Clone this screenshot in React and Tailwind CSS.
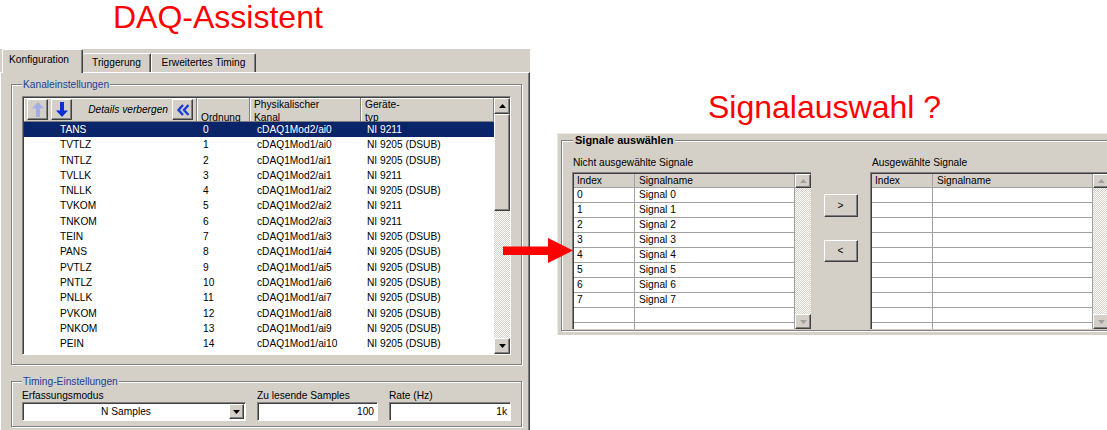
const raised = 'bg-[#d4d0c8] border border-t-white border-l-white border-r-[#404040] border-b-[#404040] shadow-[inset_-1px_-1px_0_#808080]';
const sunken = 'border border-t-[#808080] border-l-[#808080] border-r-white border-b-white shadow-[inset_1px_1px_0_#404040]';
const headCell = 'border-r border-b border-r-[#808080] border-b-[#808080] shadow-[inset_1px_1px_0_white]';
const dither = 'bg-[image:repeating-conic-gradient(#ffffff_0_25%,#d4d0c8_0_50%)] bg-[length:2px_2px]';

const Tri = ({ down, color = '#000' }) => (
  <svg width="7" height="4" viewBox="0 0 7 4">
    <polygon points={down ? '0,0 7,0 3.5,4' : '3.5,0 7,4 0,4'} fill={color} />
  </svg>
);

const UpArrow = () => (
  <svg width="12" height="15" viewBox="0 0 12 15">
    <polygon points="6,0 12,6.5 8,6.5 8,15 4,15 4,6.5 0,6.5" fill="#a4aee6" />
  </svg>
);

const DownArrow = () => (
  <svg width="12" height="15" viewBox="0 0 12 15">
    <polygon points="4,0 8,0 8,8.5 12,8.5 6,15 0,8.5 4,8.5" fill="#0b2fd8" />
  </svg>
);

const Chevrons = () => (
  <svg width="14" height="12" viewBox="0 0 14 12" fill="none" stroke="#1a3dd9" strokeWidth="2.4">
    <polyline points="7,1 2.5,6 7,11" /><polyline points="12.5,1 8,6 12.5,11" />
  </svg>
);

const CHANNELS = [
  ['TANS', 0, 'cDAQ1Mod2/ai0', 'NI 9211'],
  ['TVTLZ', 1, 'cDAQ1Mod1/ai0', 'NI 9205 (DSUB)'],
  ['TNTLZ', 2, 'cDAQ1Mod1/ai1', 'NI 9205 (DSUB)'],
  ['TVLLK', 3, 'cDAQ1Mod2/ai1', 'NI 9211'],
  ['TNLLK', 4, 'cDAQ1Mod1/ai2', 'NI 9205 (DSUB)'],
  ['TVKOM', 5, 'cDAQ1Mod2/ai2', 'NI 9211'],
  ['TNKOM', 6, 'cDAQ1Mod2/ai3', 'NI 9211'],
  ['TEIN', 7, 'cDAQ1Mod1/ai3', 'NI 9205 (DSUB)'],
  ['PANS', 8, 'cDAQ1Mod1/ai4', 'NI 9205 (DSUB)'],
  ['PVTLZ', 9, 'cDAQ1Mod1/ai5', 'NI 9205 (DSUB)'],
  ['PNTLZ', 10, 'cDAQ1Mod1/ai6', 'NI 9205 (DSUB)'],
  ['PNLLK', 11, 'cDAQ1Mod1/ai7', 'NI 9205 (DSUB)'],
  ['PVKOM', 12, 'cDAQ1Mod1/ai8', 'NI 9205 (DSUB)'],
  ['PNKOM', 13, 'cDAQ1Mod1/ai9', 'NI 9205 (DSUB)'],
  ['PEIN', 14, 'cDAQ1Mod1/ai10', 'NI 9205 (DSUB)'],
];

const SIGNALS = [0, 1, 2, 3, 4, 5, 6, 7];

function SignalTable({ items }) {
  const rows = Array.from({ length: 10 }, (_, i) => items[i]);
  return (
    <div className="mt-[3px] h-[157px] w-[239px] overflow-hidden border-t border-l border-[#808080]">
      <div className="flex h-full border-t border-l border-[#404040] bg-white">
        <div className="w-[221px]">
          <div className="flex h-[14px] bg-[#d4d0c8] leading-[13px]">
            <div className="w-[61px] border-r border-b border-[#a0a0a0] pl-[3px]">Index</div>
            <div className="w-[160px] border-r border-b border-[#a0a0a0] pl-[4px]">Signalname</div>
          </div>
          {rows.map((s, i) => (
            <div key={i} className="flex h-[15px] leading-[14px]">
              <div className="w-[61px] border-r border-b border-[#a0a0a0] pl-[3px]">{s}</div>
              <div className="w-[160px] border-r border-b border-[#a0a0a0] pl-[4px]">{s !== undefined ? `Signal ${s}` : ''}</div>
            </div>
          ))}
        </div>
        <div className="flex w-[16px] flex-col">
          <div className={`flex h-[14px] items-center justify-center ${raised}`}><Tri color="#a0a0a0" /></div>
          <div className={`flex-1 ${dither}`} />
          <div className={`flex h-[15px] items-center justify-center ${raised}`}><Tri down color="#a0a0a0" /></div>
        </div>
      </div>
    </div>
  );
}

export default function App() {
  return (
    <div className="relative flex h-[430px] w-[1107px] overflow-hidden bg-white font-['Liberation_Sans',Arial,sans-serif] text-[10.2px] text-black">
      <div className="flex w-[530px] shrink-0 flex-col">
        <div className="h-[49px] pl-[113px] pt-[1px] text-[32px] leading-none text-[#ff0000]">DAQ-Assistent</div>
        <div className="flex flex-1 flex-col bg-[#d4d0c8]">
          {/* tabs */}
          <div className="flex h-[23px] items-end pl-[2px] leading-[13px]">
            <div className="relative z-10 -mb-px h-[24px] w-[81px] rounded-t-[2px] border-t border-l border-r border-t-white border-l-white border-r-[#404040] bg-[#d4d0c8] pl-[6px] pt-[3px] shadow-[inset_-1px_0_0_#808080]">Konfiguration</div>
            <div className="h-[19px] w-[68px] rounded-t-[2px] border-t border-r border-t-white border-r-[#404040] pt-[2px] text-center shadow-[inset_-1px_0_0_#808080]">Triggerung</div>
            <div className="h-[19px] w-[105px] rounded-t-[2px] border-t border-l border-r border-t-white border-l-white border-r-[#404040] pt-[2px] text-center shadow-[inset_-1px_0_0_#808080]">Erweitertes Timing</div>
          </div>
          <div className="flex-1 border-t border-l border-r border-t-white border-l-white border-r-[#404040] pl-[10px] pt-[5px] shadow-[inset_-1px_0_0_#808080]">
            <fieldset className="w-[511px] border border-[#808080] px-[10px] pb-[9px] shadow-[inset_1px_1px_0_white,1px_1px_0_white]">
              <legend className="bg-[#d4d0c8] px-[1px] leading-[13px] text-[#21409a]">Kanaleinstellungen</legend>
              <div className={`mt-[5px] flex h-[259px] pl-px pt-px ${sunken}`}>
                <div className="flex w-[470px] flex-col bg-white">
                  <div className="flex h-[24px] bg-[#d4d0c8] leading-[13px]">
                    <div className={`flex w-[173px] items-center pl-[3px] pr-[3px] ${headCell}`}>
                      <span className={`flex h-[21px] w-[21px] items-center justify-center ${raised}`}><UpArrow /></span>
                      <span className={`ml-[3px] flex h-[21px] w-[21px] items-center justify-center ${raised}`}><DownArrow /></span>
                      <span className="ml-auto mr-[4px] italic">Details verbergen</span>
                      <span className={`flex h-[21px] w-[21px] items-center justify-center ${raised}`}><Chevrons /></span>
                    </div>
                    <div className={`w-[53px] pl-[4px] pt-[13px] ${headCell}`}>Ordnung</div>
                    <div className={`w-[111px] pl-[4px] ${headCell}`}>Physikalischer<br />Kanal</div>
                    <div className={`w-[133px] pl-[4px] ${headCell}`}>Geräte-<br />typ</div>
                  </div>
                  {CHANNELS.map(([name, idx, chan, type], i) => (
                    <div key={name} className={`flex h-[15.3px] leading-[15.3px] ${i === 0 ? 'bg-[#0a246a] text-white' : ''}`}>
                      <div className="w-[173px] pl-[36px]">{name}</div>
                      <div className="w-[53px] pl-[6px]">{idx}</div>
                      <div className="w-[111px] pl-[7px]">{chan}</div>
                      <div className="w-[133px] pl-[6px]">{type}</div>
                    </div>
                  ))}
                </div>
                <div className="flex w-[16px] flex-col">
                  <div className={`flex h-[16px] items-center justify-center ${raised}`}><Tri /></div>
                  <div className={`h-[97px] ${raised}`} />
                  <div className={`flex-1 ${dither}`} />
                  <div className={`flex h-[16px] items-center justify-center ${raised}`}><Tri down /></div>
                </div>
              </div>
            </fieldset>
            <fieldset className="mt-[10px] w-[511px] border border-[#808080] px-[10px] pb-[5px] shadow-[inset_1px_1px_0_white,1px_1px_0_white]">
              <legend className="bg-[#d4d0c8] px-[1px] leading-[13px] text-[#21409a]">Timing-Einstellungen</legend>
              <div className="flex gap-[11px] leading-[13px]">
                <div className="w-[224px]">
                  <div className="mt-px">Erfassungsmodus</div>
                  <div className={`flex h-[19px] items-center bg-white ${sunken}`}>
                    <span className="flex-1 text-center">N Samples</span>
                    <span className={`mr-px flex h-[15px] w-[15px] items-center justify-center ${raised}`}><Tri down /></span>
                  </div>
                </div>
                <div className="w-[121px]">
                  <div className="mt-px">Zu lesende Samples</div>
                  <div className={`flex h-[19px] items-center justify-end bg-white pr-[3px] ${sunken}`}>100</div>
                </div>
                <div className="w-[122px]">
                  <div className="mt-px">Rate (Hz)</div>
                  <div className={`flex h-[19px] items-center justify-end bg-white pr-[3px] ${sunken}`}>1k</div>
                </div>
              </div>
            </fieldset>
          </div>
        </div>
      </div>

      <div className="flex min-w-0 flex-1 flex-col">
        <div className="mt-[91px] h-[42px] pl-[178px] text-[32px] leading-none text-[#ff0000]">Signalauswahl ?</div>
        <div className="ml-[27px] h-[202px] w-[560px] shrink-0 overflow-hidden border-t border-l border-[#ecebe6] bg-[#d4d0c8]">
          <fieldset className="ml-[3px] w-[556px] border border-[#808080] pb-px pl-[11px] shadow-[inset_1px_1px_0_white,1px_1px_0_white]">
            <legend className="bg-[#d4d0c8] px-[2px] text-[11px] font-bold leading-[13px]">Signale auswählen</legend>
            <div className="flex">
              <div className="-ml-px w-[239px]">
                <div className="mt-[9px] pl-px leading-[13px]">Nicht ausgewählte Signale</div>
                <SignalTable items={SIGNALS} />
              </div>
              <div className="flex w-[59px] flex-col items-center pt-[47px]">
                <button className={`h-[23px] w-[34px] ${raised}`}>&gt;</button>
                <button className={`mt-[23px] h-[22px] w-[34px] ${raised}`}>&lt;</button>
              </div>
              <div className="w-[239px]">
                <div className="mt-[9px] pl-[2px] leading-[13px]">Ausgewählte Signale</div>
                <SignalTable items={[]} />
              </div>
            </div>
          </fieldset>
        </div>
      </div>

      <svg className="absolute left-[503px] top-[238px]" width="70" height="26" viewBox="0 0 70 26">
        <polygon points="0,8.5 45,8.5 45,0 70,12.5 45,25 45,17 0,17" fill="#ff0000" />
      </svg>
    </div>
  );
}
